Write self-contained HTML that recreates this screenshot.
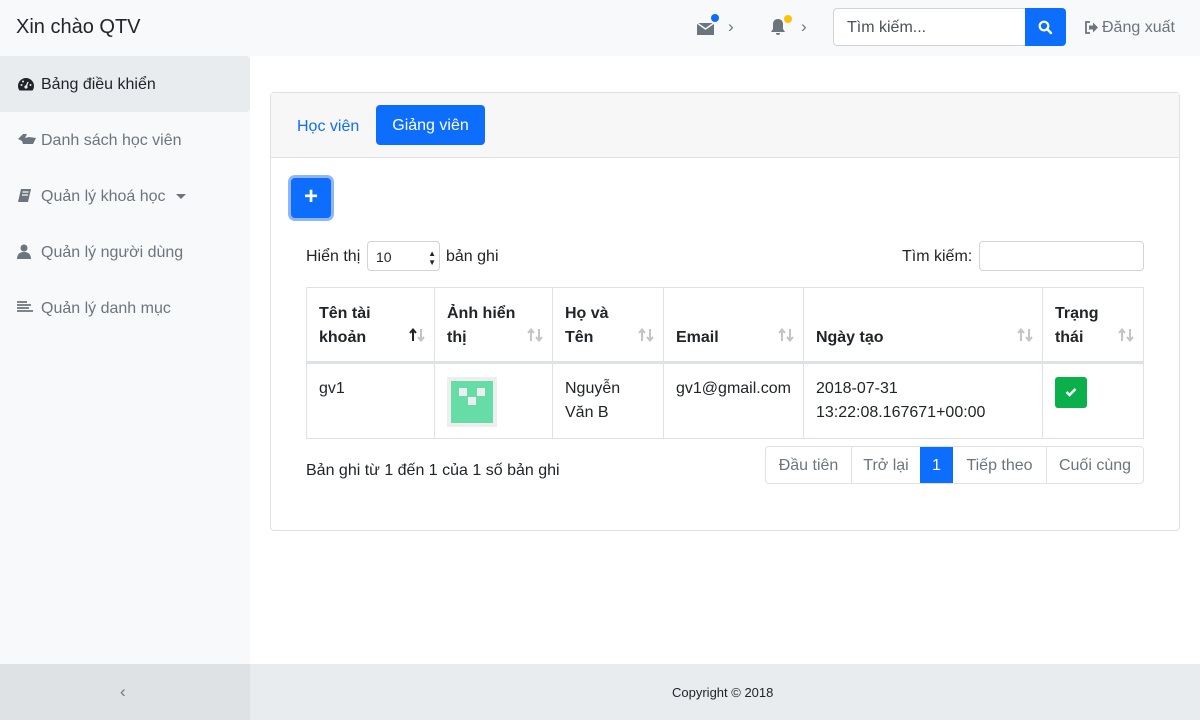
<!DOCTYPE html>
<html><head><meta charset="utf-8"><style>
*{box-sizing:border-box;margin:0;padding:0}
body{width:1200px;height:720px;overflow:hidden;font-family:"Liberation Sans",sans-serif;font-size:16px;color:#212529;background:#fff;position:relative}
.a{position:absolute}
.hdr{left:0;top:0;width:1200px;height:56px;background:#f8f9fa}
.side{left:0;top:56px;width:250px;height:608px;background:#f8f9fa}
.si{position:absolute;left:0;width:250px;height:56px;line-height:58px;padding-left:41px;color:#6c757d;font-size:16px}
.si svg{position:absolute;left:17px;top:20px}
.foot{left:0;top:664px;width:1200px;height:56px;background:#e9ecef}
.card{left:270px;top:92px;width:910px;height:439px;border:1px solid #dee2e6;border-radius:4px}
.ch{left:0;top:0;width:908px;height:65px;background:#f7f7f7;border-bottom:1px solid #dee2e6}
table{position:absolute;left:306px;top:287px;border-collapse:collapse;width:838px}
td,th{border:1px solid #dee2e6;vertical-align:top;text-align:left;padding:13px 12px 11px;line-height:24px}
th{font-weight:bold;vertical-align:bottom;border-bottom:3px solid #dee2e6;position:relative;height:75px}
th svg{position:absolute;right:9px;bottom:19px}
.pg{left:765px;top:446px;width:379px;height:38px;display:flex;border:1px solid #dee2e6;border-radius:4px;overflow:hidden}
.pg div{text-align:center;line-height:37px;color:#6c757d;border-left:1px solid #dee2e6}
.pg div:first-child{border-left:0}
</style></head><body>
<svg width="0" height="0" style="position:absolute"><defs>
<symbol id="up" viewBox="0 0 8 14"><path d="M4 13V2M1 5l3-3.5L7 5" stroke-width="2" fill="none"/></symbol>
</defs></svg>
<div class="a hdr">
 <div class="a" style="left:16px;top:16px;font-size:20px">Xin chào QTV</div>
 <svg class="a" style="left:697px;top:20px" width="20" height="16" viewBox="0 0 20 16"><path d="M0 3h17v12H0z" fill="#6c757d"/><path d="M0 3l8.5 6L17 3" stroke="#f8f9fa" stroke-width="1.5" fill="none"/></svg>
 <div class="a" style="left:711px;top:14px;width:8px;height:8px;border-radius:50%;background:#0d6efd"></div>
 <div class="a" style="left:728px;top:17px;color:#6c757d;font-size:17px">›</div>
 <svg class="a" style="left:770px;top:18px" width="18" height="18" viewBox="0 0 18 18"><path d="M8 1c-3 0-5 2-5 5v5l-2 3h14l-2-3V6c0-3-2-5-5-5zM6 15a2 2 0 004 0z" fill="#6c757d"/></svg>
 <div class="a" style="left:784px;top:15px;width:8px;height:8px;border-radius:50%;background:#ffc107"></div>
 <div class="a" style="left:801px;top:17px;color:#6c757d;font-size:17px">›</div>
 <div class="a" style="left:833px;top:8px;width:193px;height:38px;border:1px solid #ced4da;border-radius:4px 0 0 4px;background:#fff;padding-left:13px;line-height:38px;color:#495057">Tìm kiếm...</div>
 <div class="a" style="left:1025px;top:8px;width:41px;height:38px;background:#0d6efd;border-radius:0 4px 4px 0"><svg style="position:absolute;left:13px;top:12px" width="15" height="15" viewBox="0 0 15 15"><circle cx="6" cy="6" r="4.3" stroke="#fff" stroke-width="2.2" fill="none"/><path d="M9 9l4 4" stroke="#fff" stroke-width="2.4" stroke-linecap="round"/></svg></div>
 <svg class="a" style="left:1084px;top:21px" width="15" height="13" viewBox="0 0 15 13"><path d="M6 1H2v11h4" stroke="#6c757d" stroke-width="1.8" fill="none"/><path d="M5 4.5h4V1.5l5 5-5 5v-3H5z" fill="#6c757d"/></svg>
 <div class="a" style="left:1102px;top:19px;color:#6c757d">Đăng xuất</div>
</div>
<div class="a side">
 <div class="si" style="top:0;background:#e9ecef;color:#212529;border-radius:0 4px 4px 0"><svg width="18" height="16" viewBox="0 0 18 16"><path d="M9 2a8 8 0 00-8 8c0 2 .7 3.5 1.5 4.5h13C16.3 13.5 17 12 17 10a8 8 0 00-8-8z" fill="#212529"/><circle cx="9" cy="11" r="1.6" fill="#e9ecef"/><path d="M9 11l2-5" stroke="#e9ecef" stroke-width="1.3"/><circle cx="4.5" cy="9" r="1" fill="#e9ecef"/><circle cx="13.5" cy="9" r="1" fill="#e9ecef"/><circle cx="6" cy="5.5" r="1" fill="#e9ecef"/></svg>Bảng điều khiển</div>
 <div class="si" style="top:56px"><svg width="20" height="14" viewBox="0 0 20 14"><path d="M1 7l5-5h4l-2 4 4-1 7 1-3 6H6l-1-3z" fill="#6c757d"/></svg>Danh sách học viên</div>
 <div class="si" style="top:112px"><svg width="16" height="16" viewBox="0 0 16 16"><path d="M4 1h10l-3 13H1z" fill="#6c757d"/><path d="M5.5 4h6M5 7h6" stroke="#f8f9fa" stroke-width="1.2"/></svg>Quản lý khoá học<span style="display:inline-block;margin-left:10px;border:5px solid transparent;border-top-color:#6c757d;vertical-align:-3px"></span></div>
 <div class="si" style="top:168px"><svg width="14" height="16" viewBox="0 0 14 16"><circle cx="7" cy="4" r="3.5" fill="#6c757d"/><path d="M0 15c0-5 3-7 7-7s7 2 7 7z" fill="#6c757d"/></svg>Quản lý người dùng</div>
 <div class="si" style="top:224px"><svg width="16" height="14" viewBox="0 0 16 14"><path d="M0 2h10M0 5h14M0 8h12M0 11h16" stroke="#6c757d" stroke-width="1.8"/></svg>Quản lý danh mục</div>
</div>
<div class="a foot">
 <div class="a" style="left:0;top:0;width:250px;height:56px;background:#dfe2e5"></div>
 <div class="a" style="left:120px;top:18px;color:#6c757d;font-size:17px">‹</div>
 <div class="a" style="left:672px;top:21px;font-size:13px">Copyright © 2018</div>
</div>
<div class="a card">
 <div class="a ch">
  <div class="a" style="left:26px;top:25px;color:#0d6efd">Học viên</div>
  <div class="a" style="left:105px;top:12px;width:109px;height:40px;background:#0d6efd;border-radius:4px;color:#fff;text-align:center;line-height:42px">Giảng viên</div>
 </div>
 <div class="a" style="left:17px;top:82px;width:46px;height:46px;border-radius:7px;background:#8fb6fb"></div>
 <div class="a" style="left:20px;top:85px;width:40px;height:40px;border-radius:4px;background:#0d6efd;color:#fff;text-align:center;line-height:38px;font-size:24px;font-weight:bold">+</div>
</div>
<div class="a" style="left:306px;top:248px">Hiển thị</div>
<div class="a" style="left:367px;top:241px;width:73px;height:30px;border:1px solid #ced4da;border-radius:4px;font-size:14px;line-height:30px;padding-left:8px">10<span style="position:absolute;right:3px;font-size:8px;line-height:9px;top:7px">▲<br>▼</span></div>
<div class="a" style="left:446px;top:248px">bản ghi</div>
<div class="a" style="left:902px;top:248px">Tìm kiếm:</div>
<div class="a" style="left:979px;top:241px;width:165px;height:30px;border:1px solid #ced4da;border-radius:4px"></div>
<table>
<tr>
<th style="width:128px">Tên tài<br>khoản<svg width="16" height="14" viewBox="0 0 16 14"><use href="#up" x="0" width="8" height="14" stroke="#212529"/><g transform="rotate(180 12 7)"><use href="#up" x="8" width="8" height="14" stroke="#c4c4c4"/></g></svg></th>
<th style="width:118px">Ảnh hiển<br>thị<svg width="16" height="14" viewBox="0 0 16 14"><use href="#up" x="0" width="8" height="14" stroke="#c4c4c4"/><g transform="rotate(180 12 7)"><use href="#up" x="8" width="8" height="14" stroke="#c4c4c4"/></g></svg></th>
<th style="width:111px">Họ và<br>Tên<svg width="16" height="14" viewBox="0 0 16 14"><use href="#up" x="0" width="8" height="14" stroke="#c4c4c4"/><g transform="rotate(180 12 7)"><use href="#up" x="8" width="8" height="14" stroke="#c4c4c4"/></g></svg></th>
<th style="width:139px">Email<svg width="16" height="14" viewBox="0 0 16 14"><use href="#up" x="0" width="8" height="14" stroke="#c4c4c4"/><g transform="rotate(180 12 7)"><use href="#up" x="8" width="8" height="14" stroke="#c4c4c4"/></g></svg></th>
<th style="width:239px">Ngày tạo<svg width="16" height="14" viewBox="0 0 16 14"><use href="#up" x="0" width="8" height="14" stroke="#c4c4c4"/><g transform="rotate(180 12 7)"><use href="#up" x="8" width="8" height="14" stroke="#c4c4c4"/></g></svg></th>
<th>Trạng<br>thái<svg width="16" height="14" viewBox="0 0 16 14"><use href="#up" x="0" width="8" height="14" stroke="#c4c4c4"/><g transform="rotate(180 12 7)"><use href="#up" x="8" width="8" height="14" stroke="#c4c4c4"/></g></svg></th></tr>
<tr><td style="height:75px">gv1</td><td><div style="width:50px;height:50px;background:#eee;padding:4px"><svg width="42" height="42" viewBox="0 0 42 42"><rect width="42" height="42" fill="#66dda6"/><rect x="8" y="7" width="8" height="8" fill="#eee"/><rect x="26" y="7" width="8" height="8" fill="#eee"/><rect x="17" y="16" width="8" height="8" fill="#eee"/></svg></div></td><td>Nguyễn<br>Văn B</td><td>gv1@gmail.com</td><td>2018-07-31<br>13:22:08.167671+00:00</td><td><div style="width:32px;height:31px;background:#0bb04b;border-radius:3px"><svg style="margin:10px 0 0 10px" width="12" height="10" viewBox="0 0 12 10"><path d="M1.5 5l3 3 6-6" stroke="#fff" stroke-width="2.4" fill="none"/></svg></div></td></tr>
</table>
<div class="a" style="left:306px;top:462px">Bản ghi từ 1 đến 1 của 1 số bản ghi</div>
<div class="a pg"><div style="width:85px">Đầu tiên</div><div style="width:69px">Trở lại</div><div style="width:33px;background:#0d6efd;color:#fff;border-left:0">1</div><div style="width:93px;border-left:0">Tiếp theo</div><div style="flex:1">Cuối cùng</div></div>
</body></html>
